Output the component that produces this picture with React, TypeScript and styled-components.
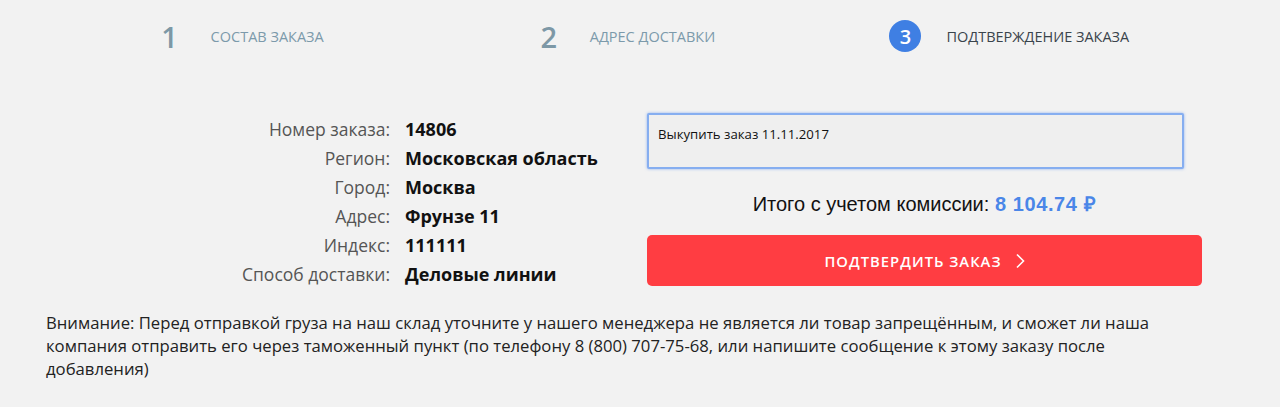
import React from "react";
import styled, { createGlobalStyle } from "styled-components";

const GlobalStyle = createGlobalStyle`
  body {
    margin: 0;
    background: #f2f2f2;
    font-family: "Open Sans", "Liberation Sans", sans-serif;
    color: #222;
  }
`;

const steps = [
  { num: 1, label: "Состав заказа" },
  { num: 2, label: "Адрес доставки" },
  { num: 3, label: "Подтверждение заказа" },
];

const details = [
  { label: "Номер заказа:", value: "14806" },
  { label: "Регион:", value: "Московская область" },
  { label: "Город:", value: "Москва" },
  { label: "Адрес:", value: "Фрунзе 11" },
  { label: "Индекс:", value: "111111" },
  { label: "Способ доставки:", value: "Деловые линии" },
];

const App: React.FC = () => {
  const current = 3;
  return (
    <>
      <GlobalStyle />
      <Page>
        <Steps>
          {steps.map((step) => (
            <Step key={step.num}>
              <StepNumber active={step.num === current}>{step.num}</StepNumber>
              <StepLabel active={step.num === current}>{step.label}</StepLabel>
            </Step>
          ))}
        </Steps>

        <Main>
          <Details>
            {details.map((row) => (
              <React.Fragment key={row.label}>
                <DetailLabel>{row.label}</DetailLabel>
                <DetailValue>{row.value}</DetailValue>
              </React.Fragment>
            ))}
          </Details>

          <Summary>
            <Comment readOnly defaultValue="Выкупить заказ 11.11.2017" />
            <Total>
              Итого с учетом комиссии: <Price>8 104.74 ₽</Price>
            </Total>
            <ConfirmButton type="button">
              Подтвердить заказ
              <svg width="10" height="16" viewBox="0 0 10 16" fill="none">
                <path d="M2 1.5L8.5 8L2 14.5" stroke="#fff" strokeWidth="1.6" />
              </svg>
            </ConfirmButton>
          </Summary>
        </Main>

        <Warning>
          Внимание: Перед отправкой груза на наш склад уточните у нашего менеджера не является ли
          товар запрещённым, и сможет ли наша компания отправить его через таможенный пункт (по
          телефону 8 (800) 707-75-68, или напишите сообщение к этому заказу после добавления)
        </Warning>
      </Page>
    </>
  );
};

const Page = styled.div`
  width: 1156px;
  margin-left: 46px;
  padding-top: 20px;
`;

const Steps = styled.div`
  display: grid;
  grid-template-columns: repeat(3, 1fr);
`;

const Step = styled.div`
  display: flex;
  align-items: center;
  justify-content: center;
  gap: 25px;
  height: 32px;
`;

const StepNumber = styled.div<{ active?: boolean }>`
  width: 32px;
  height: 32px;
  border-radius: 50%;
  display: flex;
  align-items: center;
  justify-content: center;
  font-weight: 600;
  font-size: ${(p) => (p.active ? "20px" : "29px")};
  color: ${(p) => (p.active ? "#fff" : "#7d98a6")};
  background: ${(p) => (p.active ? "#3f7fe3" : "transparent")};
`;

const StepLabel = styled.div<{ active?: boolean }>`
  font-size: 14.5px;
  text-transform: uppercase;
  color: ${(p) => (p.active ? "#3a444c" : "#7c9aab")};
`;

const Main = styled.div`
  display: grid;
  grid-template-columns: 601px 1fr;
  margin-top: 61px;
`;

const Details = styled.div`
  display: grid;
  grid-template-columns: 344px auto;
  column-gap: 15px;
  align-content: start;
  margin-top: 2px;
  font-size: 17.5px;
  line-height: 29px;
`;

const DetailLabel = styled.div`
  text-align: right;
  color: #555;
`;

const DetailValue = styled.div`
  font-size: 18px;
  font-weight: 700;
  color: #111;
`;

const Summary = styled.div`
  display: flex;
  flex-direction: column;
`;

const Comment = styled.textarea`
  width: 537px;
  height: 56px;
  box-sizing: border-box;
  resize: none;
  padding: 10px 9px;
  border: 2px solid #86aef0;
  border-radius: 2px;
  box-shadow: 0 0 3px rgba(80, 140, 240, 0.6);
  background: #efefef;
  font-family: "Open Sans", "Liberation Sans", sans-serif;
  font-size: 13.2px;
  line-height: 18px;
  color: #111;
  outline: none;
`;

const Total = styled.div`
  margin-top: 21px;
  text-align: center;
  font-family: "Liberation Sans", Arial, sans-serif;
  font-size: 20px;
  line-height: 28px;
  color: #111;
`;

const Price = styled.span`
  font-weight: 700;
  letter-spacing: 0.6px;
  color: #4a86e8;
`;

const ConfirmButton = styled.button`
  margin-top: 17px;
  height: 51px;
  display: flex;
  align-items: center;
  justify-content: center;
  gap: 13px;
  border: none;
  border-radius: 5px;
  background: #ff3d42;
  color: #fff;
  font-family: "Open Sans", "Liberation Sans", sans-serif;
  font-size: 14.8px;
  font-weight: 600;
  letter-spacing: 1px;
  text-transform: uppercase;
  cursor: pointer;
`;

const Warning = styled.p`
  margin: 22px 0 0;
  font-size: 16.7px;
  line-height: 23px;
  color: #222;
`;

export default App;
